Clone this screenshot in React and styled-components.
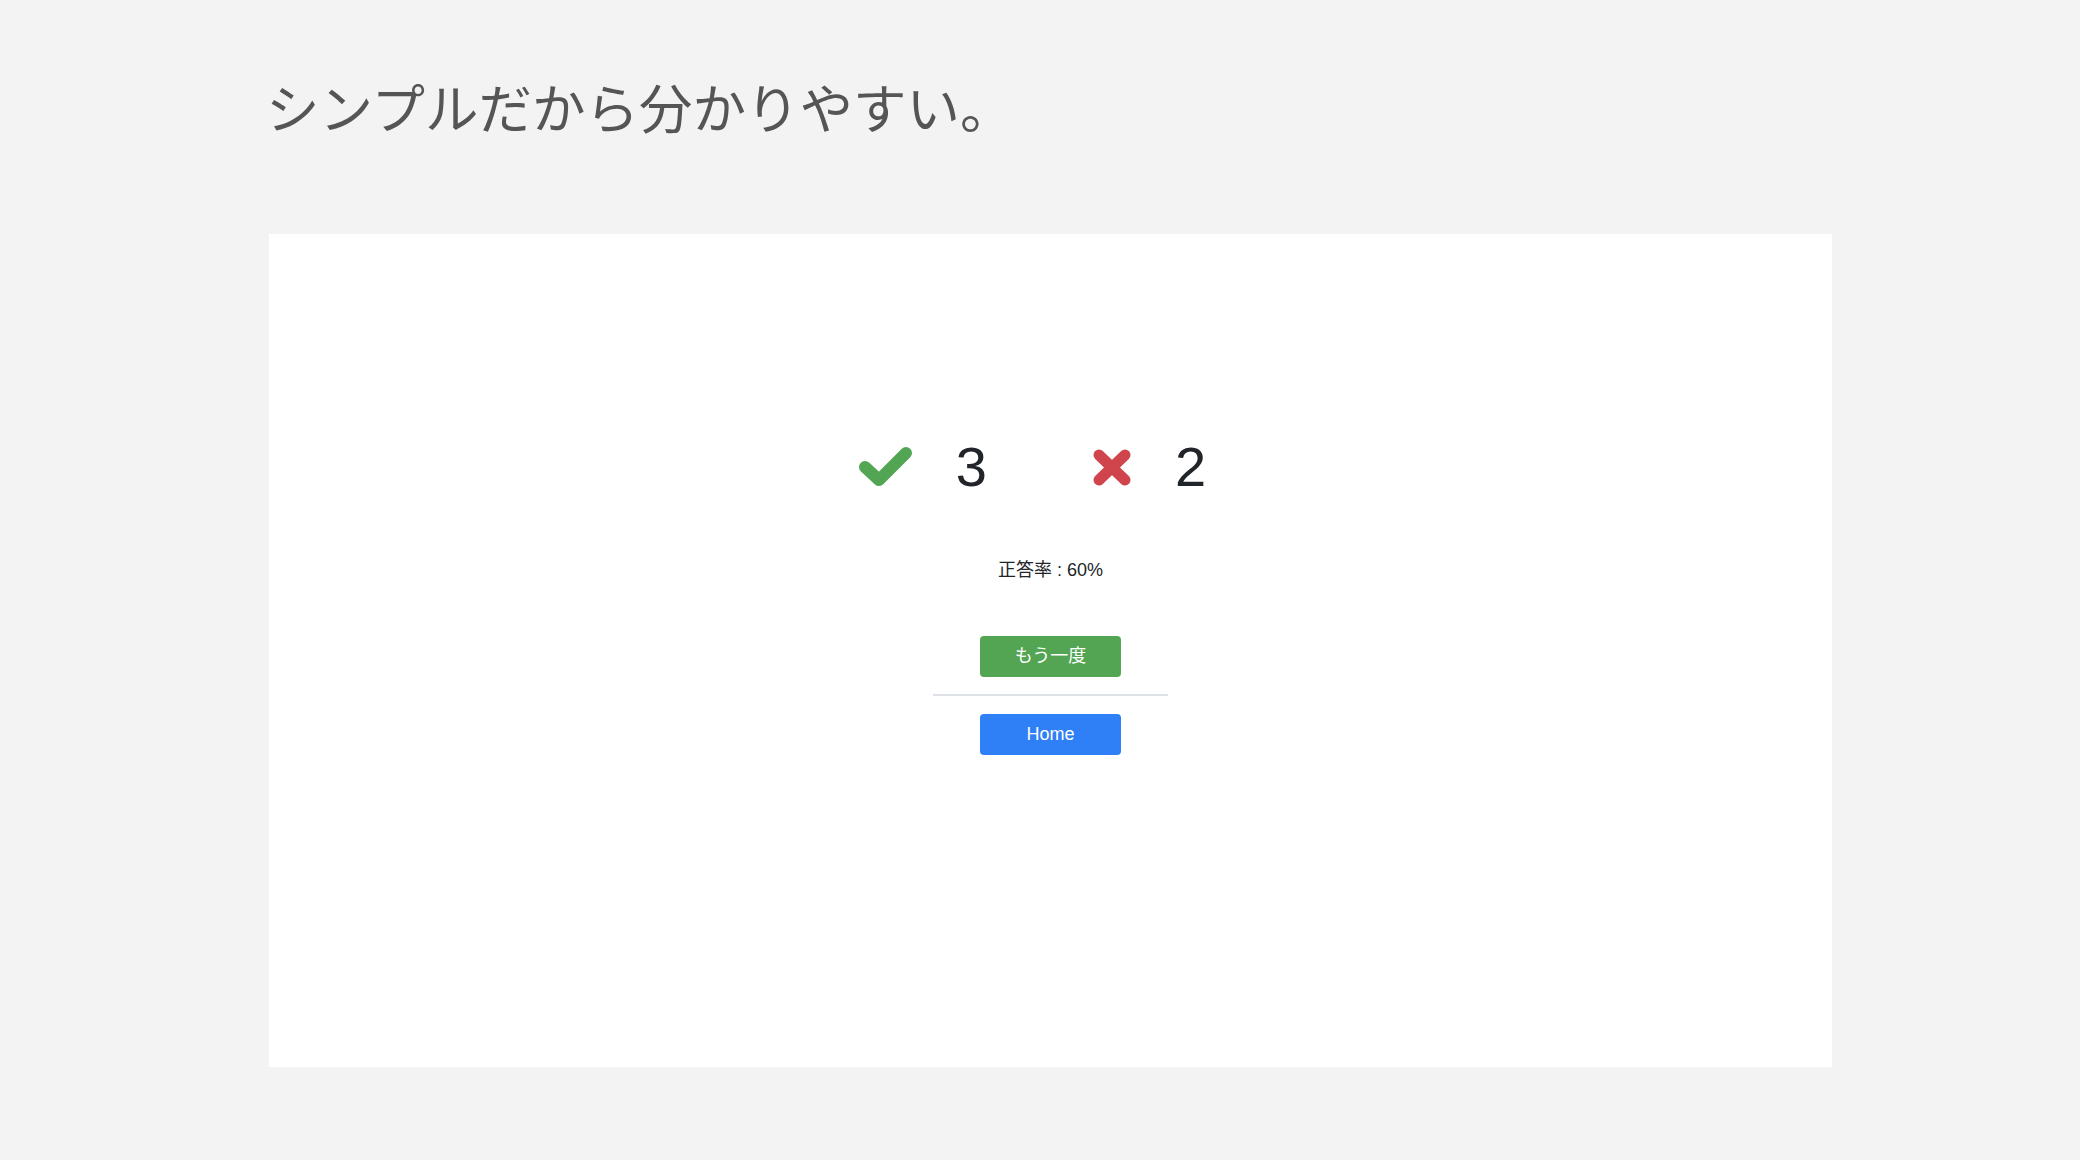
import React from "react";
import styled, { createGlobalStyle } from "styled-components";

const Global = createGlobalStyle`
  html, body { margin: 0; padding: 0; background: #f3f3f3; }
  body { font-family: "Liberation Sans", "Noto Sans CJK JP", sans-serif; }
`;

const Page = styled.div`
  width: 2080px;
  min-height: 1160px;
  box-sizing: border-box;
  padding: 77px 0 0 266px;
  background: #f3f3f3;
`;

const Title = styled.h1`
  margin: 0;
  font-family: "Noto Sans CJK JP", sans-serif;
  font-weight: 400;
  font-size: 53.5px;
  line-height: 57px;
  color: #555555;
  letter-spacing: 0;
`;

const Card = styled.main`
  margin: 100px 0 0 3px;
  width: 1563px;
  height: 833px;
  background: #ffffff;
  box-sizing: border-box;
  padding-top: 203px;
  display: flex;
  flex-direction: column;
  align-items: center;
`;

const ScoreRow = styled.div`
  height: 60px;
  display: flex;
  align-items: center;
  padding-right: 36px;
`;

const Score = styled.div`
  display: flex;
  align-items: center;
  margin-left: ${(p) => p.$offset}px;
`;

const Num = styled.span`
  font-family: "Liberation Sans", sans-serif;
  font-size: 56px;
  line-height: 60px;
  color: #212529;
  margin-left: ${(p) => p.$gap}px;
`;

const Rate = styled.p`
  margin: 60px 0 0;
  font-size: 18px;
  line-height: 26px;
  color: #212529;
`;

const Button = styled.button`
  width: 141px;
  height: 41px;
  border: none;
  border-radius: 4px;
  background: ${(p) => p.$bg};
  color: #ffffff;
  font-family: "Liberation Sans", "Noto Sans CJK JP", sans-serif;
  font-size: 18px;
  line-height: 41px;
  padding: 0;
  margin-top: ${(p) => p.$mt}px;
  cursor: pointer;
`;

const Divider = styled.hr`
  width: 235px;
  height: 2px;
  margin: 17px 0 0;
  border: none;
  background: #dee2e6;
`;

const Check = () => (
  <svg width="53" height="40" viewBox="0 0 53 40">
    <polyline
      points="6,20 20,33 47,6"
      fill="none"
      stroke="#52a552"
      strokeWidth="12"
      strokeLinecap="round"
      strokeLinejoin="round"
    />
  </svg>
);

const Cross = () => (
  <svg width="38" height="37" viewBox="0 0 38 37">
    <g stroke="#d0444c" strokeWidth="11" strokeLinecap="round">
      <line x1="6" y1="6" x2="32" y2="31" />
      <line x1="32" y1="6" x2="6" y2="31" />
    </g>
  </svg>
);

export default function App() {
  return (
    <>
      <Global />
      <Page>
        <Title>シンプルだから分かりやすい。</Title>
        <Card>
          <ScoreRow>
            <Score $offset={0}>
              <Check />
              <Num $gap={44}>3</Num>
            </Score>
            <Score $offset={106}>
              <Cross />
              <Num $gap={44}>2</Num>
            </Score>
          </ScoreRow>
          <Rate>正答率 : 60%</Rate>
          <Button $bg="#53a553" $mt={53}>もう一度</Button>
          <Divider />
          <Button $bg="#2f7ff6" $mt={18}>Home</Button>
        </Card>
      </Page>
    </>
  );
}
